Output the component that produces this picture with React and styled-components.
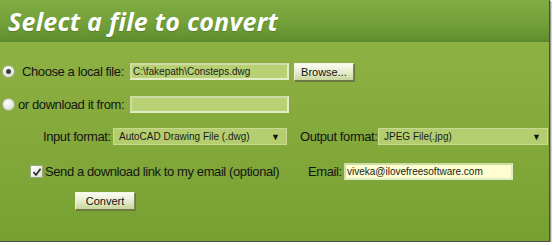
import React from 'react'
import styled, { createGlobalStyle } from 'styled-components'

const Global = createGlobalStyle`
    html, body {
        margin: 0;
        padding: 0;
        background: #fff;
    }
    body {
        font-family: "Liberation Sans", Arial, sans-serif;
    }
`

const Panel = styled.div`
    width: 549px;
    height: 241px;
    border-right: 1px solid #4a4a4a;
    border-bottom: 1px solid #4a4a4a;
    box-shadow: 1px 1px 0 #9a9a9a, 2px 2px 0 #d8d8d8;
    background: linear-gradient(180deg, #91b447 0%, #87ac3d 45%, #76a032 100%);
    display: flex;
    flex-direction: column;
`

const Header = styled.div`
    height: 41px;
    border-bottom: 1px solid #5b872b;
    background: linear-gradient(180deg, #80ad42 0%, #73a039 55%, #5f8e2e 100%);
    display: flex;
    align-items: center;
    padding-left: 8px;
`

const Title = styled.h1`
    margin: 0;
    font-family: "Open Sans", sans-serif;
    font-weight: 700;
    font-style: italic;
    font-size: 25px;
    letter-spacing: 0.25px;
    color: #fff;
    text-shadow: 0 1px 1px rgba(60, 90, 20, 0.4);
`

const Body = styled.div`
    display: flex;
    flex-direction: column;
    padding-top: 21px;
`

const Row = styled.div`
    display: flex;
    align-items: center;
    height: ${p => p.$h || 17}px;
    margin-top: ${p => p.$top || 0}px;
    padding-left: ${p => p.$indent || 0}px;
`

const Radio = styled.span`
    width: 11px;
    height: 11px;
    margin-left: 2px;
    border-radius: 50%;
    border: 1px solid #a8b58c;
    background: radial-gradient(circle at 40% 35%, #ffffff 0%, #e4e8dc 60%, #c9cfbd 100%);
    display: flex;
    align-items: center;
    justify-content: center;
    flex: none;
    &::after {
        content: '';
        width: 5px;
        height: 5px;
        border-radius: 50%;
        background: ${p => (p.$checked ? '#3d3d3d' : 'transparent')};
    }
`

const Check = styled.span`
    width: 11px;
    height: 11px;
    border: 1px solid #9aa680;
    background: linear-gradient(135deg, #ffffff 0%, #dfe4d4 100%);
    display: flex;
    align-items: center;
    justify-content: center;
    flex: none;
`

const Label = styled.span`
    font-size: 13px;
    letter-spacing: -0.4px;
    color: #151515;
    white-space: nowrap;
    width: ${p => (p.$w ? `${p.$w}px` : 'auto')};
    padding-left: ${p => p.$pad || 0}px;
    flex: none;
    box-sizing: border-box;
`

const TextField = styled.div`
    width: ${p => p.$w}px;
    height: 17px;
    box-sizing: border-box;
    border: 2px solid #e2ecc6;
    border-top-color: #cfdca8;
    border-left-color: #cfdca8;
    background: ${p => p.$bg || '#b8d174'};
    font-size: 10px;
    color: #1a1a1a;
    padding-left: 1px;
    display: flex;
    align-items: center;
    white-space: nowrap;
    overflow: hidden;
    flex: none;
`

const Select = styled.div`
    width: ${p => p.$w}px;
    height: 17px;
    box-sizing: border-box;
    border: 1px solid #c8da92;
    background: #b4ce6f;
    font-size: 10px;
    color: #1a1a1a;
    padding: 0 6px 0 5px;
    display: flex;
    align-items: center;
    justify-content: space-between;
    flex: none;
`

const Arrow = styled.span`
    font-size: 9px;
    color: #111;
`

const Button = styled.button`
    width: ${p => p.$w}px;
    height: 18px;
    margin-left: ${p => p.$ml || 0}px;
    padding: 0;
    box-sizing: border-box;
    font-family: "Liberation Sans", Arial, sans-serif;
    font-size: 11px;
    color: #111;
    background: linear-gradient(180deg, #fbfcf2 0%, #e9eed2 45%, #c9d69c 100%);
    border: 1px solid;
    border-color: #f4f7e6 #7e8c5a #6f7d4c #eef2da;
    box-shadow: 1px 1px 0 #6a7a3e;
    flex: none;
`

export default function App() {
    return (
        <>
            <Global />
            <Panel>
                <Header>
                    <Title>Select a file to convert</Title>
                </Header>
                <Body>
                    <Row>
                        <Radio $checked />
                        <Label $w={115} $pad={7}>Choose a local file:</Label>
                        <TextField $w={159}>C:\fakepath\Consteps.dwg</TextField>
                        <Button $w={60} $ml={5}>Browse...</Button>
                    </Row>
                    <Row $top={16}>
                        <Radio />
                        <Label $w={115} $pad={3}>or download it from:</Label>
                        <TextField $w={159} />
                    </Row>
                    <Row $top={15} $indent={43}>
                        <Label $w={70}>Input format:</Label>
                        <Select $w={174}>
                            <span>AutoCAD Drawing File (.dwg)</span>
                            <Arrow>▼</Arrow>
                        </Select>
                        <Label $w={91} $pad={13}>Output format:</Label>
                        <Select $w={170}>
                            <span>JPEG File(.jpg)</span>
                            <Arrow>▼</Arrow>
                        </Select>
                    </Row>
                    <Row $top={18} $indent={30}>
                        <Check>
                            <svg width="10" height="10" viewBox="0 0 10 10">
                                <path d="M1.5 5.2 L4 7.8 L8.6 1.8" fill="none" stroke="#333" strokeWidth="1.8" />
                            </svg>
                        </Check>
                        <Label $w={265} $pad={2}>Send a download link to my email (optional)</Label>
                        <Label $w={36}>Email:</Label>
                        <TextField $w={169} $bg="#fdfdcf">viveka@ilovefreesoftware.com</TextField>
                    </Row>
                    <Row $top={12} $h={18} $indent={75}>
                        <Button $w={60}>Convert</Button>
                    </Row>
                </Body>
            </Panel>
        </>
    )
}
